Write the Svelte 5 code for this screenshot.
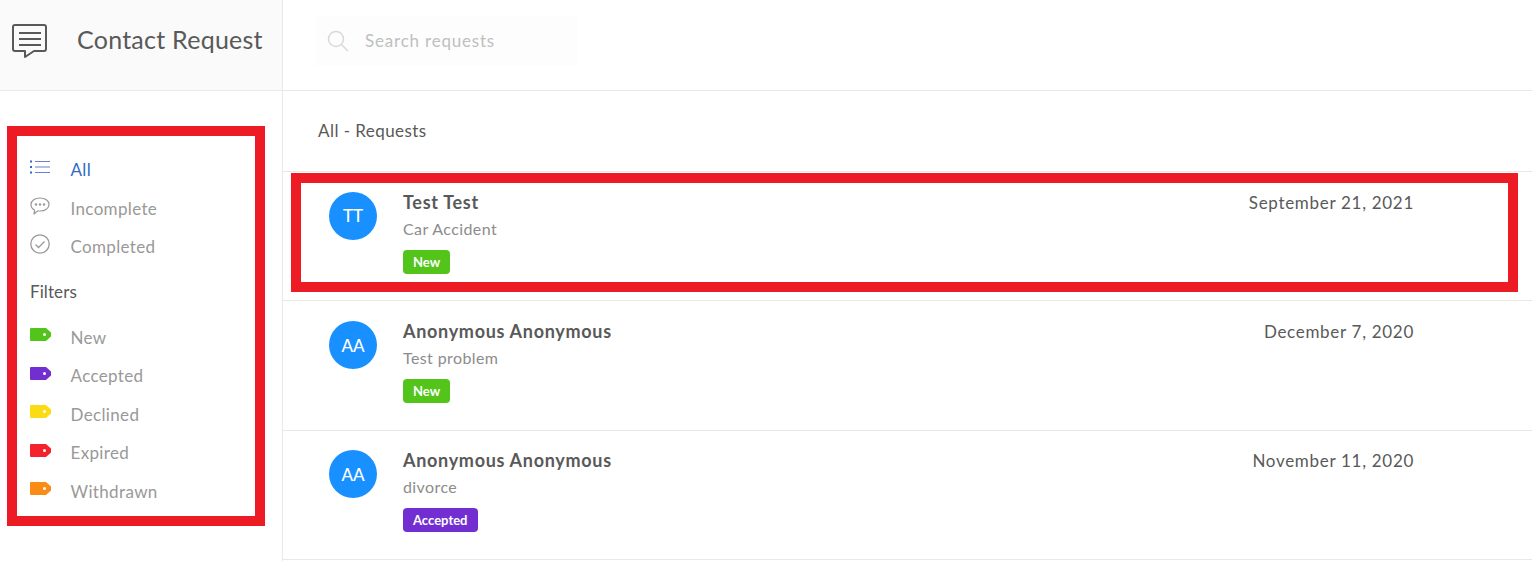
<script>
  const nav = [
    { label: 'All', icon: 'list', active: true },
    { label: 'Incomplete', icon: 'chat' },
    { label: 'Completed', icon: 'check' }
  ];

  const filters = [
    { label: 'New', color: '#52c41a' },
    { label: 'Accepted', color: '#722ed1' },
    { label: 'Declined', color: '#fadb14' },
    { label: 'Expired', color: '#f5222d' },
    { label: 'Withdrawn', color: '#fa8c16' }
  ];

  const requests = [
    { initials: 'TT', name: 'Test Test', topic: 'Car Accident', date: 'September 21, 2021', tag: 'New', color: '#52c41a' },
    { initials: 'AA', name: 'Anonymous Anonymous', topic: 'Test problem', date: 'December 7, 2020', tag: 'New', color: '#52c41a' },
    { initials: 'AA', name: 'Anonymous Anonymous', topic: 'divorce', date: 'November 11, 2020', tag: 'Accepted', color: '#722ed1' }
  ];
</script>

<div class="page">
  <aside class="sidebar">
    <div class="brand">
      <svg class="brand-icon" width="35" height="34" viewBox="0 0 35 34" fill="none" stroke="#595959" stroke-width="2">
        <path d="M3 1h29a2 2 0 0 1 2 2v22a2 2 0 0 1-2 2H22l-9 6v-6H3a2 2 0 0 1-2-2V3a2 2 0 0 1 2-2z" stroke-linejoin="round" />
        <path d="M7 9h22M7 15h22M7 21h22" />
      </svg>
      <span class="brand-name">Contact Request</span>
    </div>

    <div class="menu">
      <nav class="nav">
        {#each nav as item}
          <div class="nav-item" class:active={item.active}>
            <span class="nav-icon">
              {#if item.icon === 'list'}
                <svg width="20" height="14" viewBox="0 0 20 14" fill="none" stroke="#2f6ac8" stroke-width="1">
                  <path d="M5 1.500h15M5 7h15M5 12.500h15" stroke="#6f7fd0" />
                  <path d="M0 1.500h2M0 7h2M0 12.500h2" stroke-width="1.800" />
                </svg>
              {:else if item.icon === 'chat'}
                <svg width="20" height="18" viewBox="0 0 20 18" fill="none" stroke="#999" stroke-width="1.200">
                  <path d="M10 1c5 0 9 2.800 9 6.500S15 14 10 14l-2.500 0-3.500 3 .5-4C2.400 12 1 9.900 1 7.500 1 3.800 5 1 10 1z" stroke-linejoin="round" />
                  <circle cx="6" cy="7.500" r="1.200" fill="#999" stroke="none" />
                  <circle cx="10" cy="7.500" r="1.200" fill="#999" stroke="none" />
                  <circle cx="14" cy="7.500" r="1.200" fill="#999" stroke="none" />
                </svg>
              {:else}
                <svg width="20" height="20" viewBox="0 0 20 20" fill="none" stroke="#999" stroke-width="1.300">
                  <circle cx="10" cy="10" r="9.200" />
                  <path d="M5.500 10.500l3 3 6-6" />
                </svg>
              {/if}
            </span>
            <span>{item.label}</span>
          </div>
        {/each}
      </nav>

      <div class="filters-title">Filters</div>

      <div class="filters">
        {#each filters as filter}
          <div class="filter">
            <svg class="tag-icon" width="21" height="13" viewBox="0 0 21 13">
              <path d="M1 0h15l5 4.500v4L16 13H1a1 1 0 0 1-1-1V1a1 1 0 0 1 1-1z" fill={filter.color} />
              <circle cx="14.500" cy="6.500" r="1.500" fill="#fff" />
            </svg>
            <span>{filter.label}</span>
          </div>
        {/each}
      </div>
    </div>

    <div class="mark mark-side"></div>
  </aside>

  <main class="content">
    <div class="search-bar">
      <div class="search">
        <svg width="22" height="22" viewBox="0 0 22 22" fill="none" stroke="#d9d9d9" stroke-width="1.500">
          <circle cx="9" cy="9" r="7.500" />
          <path d="M14.500 14.500l6.500 6.500" />
        </svg>
        <span>Search requests</span>
      </div>
    </div>

    <div class="list-title">All - Requests</div>

    <div class="list">
      {#each requests as request}
        <div class="row">
          <div class="avatar">{request.initials}</div>
          <div class="info">
            <div class="name">{request.name}</div>
            <div class="topic">{request.topic}</div>
            <span class="tag" style="background: {request.color}">{request.tag}</span>
          </div>
          <div class="date">{request.date}</div>
        </div>
      {/each}
      <div class="mark mark-row"></div>
    </div>
  </main>
</div>

<style>
  :global(body) {
    background: #fff;
    font-family: Lato, "Open Sans", sans-serif;
    overflow: hidden;
  }

  .page {
    display: flex;
    height: 561px;
    color: #595959;
  }

  .sidebar {
    position: relative;
    width: 282px;
    flex-shrink: 0;
    border-right: 1px solid #e8e8e8;
  }

  .brand {
    display: flex;
    align-items: center;
    gap: 30px;
    height: 79px;
    padding: 0 0 11px 12px;
    background: #fafafa;
    border-bottom: 1px solid #e8e8e8;
  }

  .brand-icon {
    margin-top: 2px;
  }

  .brand-name {
    margin-bottom: 2px;
    font-size: 25px;
    letter-spacing: 0.25px;
  }

  .menu {
    padding: 59.400px 0 0 30px;
    font-size: 17px;
    letter-spacing: 0.35px;
    color: #999;
  }

  .nav-item {
    display: flex;
    align-items: center;
    height: 38.500px;
  }

  .nav-item.active {
    color: #2f6ac8;
  }

  .nav-icon {
    display: flex;
    width: 40.500px;
    margin-bottom: 5px;
  }

  .filters-title {
    margin: 15px 0 16.300px;
    font-size: 17px;
    letter-spacing: 0.1px;
    color: #595959;
  }

  .filter {
    display: flex;
    align-items: center;
    height: 38.500px;
  }

  .tag-icon {
    margin: 0 19.500px 5px 0;
  }

  .search-bar {
    height: 81px;
    display: flex;
    align-items: center;
    padding: 0 0 9px 33px;
    border-bottom: 1px solid #e8e8e8;
  }

  .search {
    display: flex;
    align-items: center;
    gap: 16px;
    height: 50px;
    padding-left: 11px;
    width: 250px;
    background: #fdfdfd;
    font-size: 17px;
    letter-spacing: 0.8px;
    color: #bfbfbf;
  }

  .content {
    flex: 1;
    min-width: 0;
  }

  .list-title {
    height: 51px;
    padding: 29px 0 0 35px;
    line-height: 22px;
    font-size: 17px;
    letter-spacing: 0.45px;
    border-bottom: 1px solid #e8e8e8;
  }

  .list {
    position: relative;
  }

  .row {
    display: flex;
    height: 128.330px;
    padding: 0 118px 0 46px;
    border-bottom: 1px solid #e8e8e8;
  }

  .avatar {
    display: flex;
    align-items: center;
    justify-content: center;
    width: 48px;
    height: 48px;
    margin-top: 19.700px;
    margin-right: 26px;
    border-radius: 50%;
    background: #1890ff;
    color: #fff;
    font-size: 17px;
    font-weight: 500;
  }

  .info {
    flex: 1;
    padding-top: 18.700px;
  }

  .name {
    font-size: 18px;
    font-weight: 700;
    line-height: 22px;
    letter-spacing: 0.7px;
  }

  .topic {
    margin-top: 5px;
    font-size: 16px;
    line-height: 22px;
    letter-spacing: 0.4px;
    color: #8c8c8c;
  }

  .tag {
    display: inline-block;
    margin-top: 10px;
    padding: 0 10px;
    height: 24px;
    line-height: 24px;
    border-radius: 4px;
    color: #fff;
    font-size: 13px;
    font-weight: 700;
  }

  .date {
    padding-top: 19.700px;
    font-size: 17px;
    line-height: 22px;
    letter-spacing: 0.7px;
  }

  .mark {
    position: absolute;
    border: 10px solid #ed1c24;
    box-sizing: border-box;
    pointer-events: none;
  }

  .mark-side {
    left: 7px;
    top: 126px;
    width: 258px;
    height: 400px;
  }

  .mark-row {
    left: 8px;
    top: 1px;
    width: 1227px;
    height: 119px;
  }
</style>
